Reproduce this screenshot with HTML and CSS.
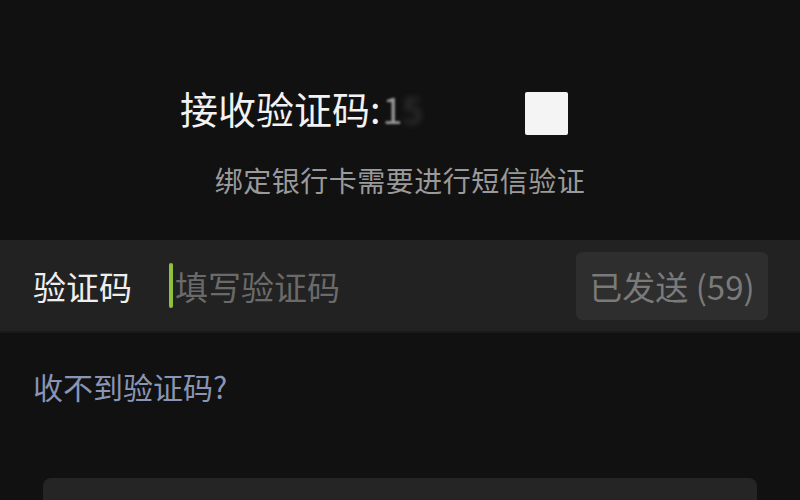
FILE: index.html
```html
<!DOCTYPE html>
<html lang="zh">
<head>
<meta charset="utf-8">
<link rel="stylesheet" href="styles.css">
</head>
<body>
<div class="page">
  <div class="title-row">
    <span class="title">接收验证码:</span><span class="digit">1</span><span class="blurred">5&nbsp;&nbsp;&nbsp;&nbsp;</span>
    <span class="square"></span>
  </div>
  <div class="subtitle">绑定银行卡需要进行短信验证</div>
  <div class="input-row">
    <span class="label">验证码</span>
    <span class="caret"></span>
    <span class="placeholder">填写验证码</span>
    <span class="send-btn">已发送 (59)</span>
  </div>
  <div class="link">收不到验证码?</div>
  <div class="bottom-btn"></div>
</div>
</body>
</html>
```
FILE: styles.css
```css
html, body {
  margin: 0;
  padding: 0;
  background: #111111;
  width: 800px;
  height: 500px;
  overflow: hidden;
}
.page {
  font-family: "Noto Sans CJK SC", "Noto Sans", sans-serif;
  display: flex;
  flex-direction: column;
}
.title-row {
  display: flex;
  align-items: center;
  padding-left: 180px;
  margin-top: 86px;
  height: 44px;
}
.title {
  font-size: 38px;
  line-height: 44px;
  color: #f2f2f2;
}
.digit {
  font-size: 36px;
  line-height: 44px;
  color: #9a9a9a;
  filter: blur(1.2px);
  margin-left: 2px;
}
.blurred {
  font-size: 36px;
  line-height: 44px;
  color: #3a3a3a;
  filter: blur(3px);
  width: 122px;
}
.square {
  width: 43px;
  height: 43px;
  background: #f4f4f4;
  border-radius: 2px;
  margin-top: 10px;
}
.subtitle {
  margin-top: 32px;
  text-align: center;
  font-size: 28px;
  line-height: 36px;
  color: #9a9a9a;
  letter-spacing: 0.5px;
}
.input-row {
  margin-top: 42px;
  height: 93px;
  background: #222222;
  display: flex;
  align-items: center;
  padding: 0 32px 0 33px;
  border-bottom: 2px solid #1a1a1a;
  box-sizing: border-box;
}
.label {
  font-size: 33px;
  color: #eeeeee;
  width: 136px;
}
.caret {
  width: 4px;
  height: 45px;
  background: #8fc23c;
  border-radius: 2px;
  margin-right: 2px;
}
.placeholder {
  font-size: 33px;
  color: #6a6a6a;
  flex: 1;
}
.send-btn {
  width: 192px;
  height: 68px;
  background: #2e2e2e;
  border-radius: 6px;
  display: flex;
  align-items: center;
  justify-content: center;
  font-size: 33px;
  color: #7a7a7a;
}
.link {
  margin-top: 33px;
  padding-left: 33px;
  font-size: 30px;
  line-height: 40px;
  color: #8a95b5;
}
.bottom-btn {
  margin: 72px 43px 0 43px;
  height: 22px;
  background: #252525;
  border-radius: 8px 8px 0 0;
}
```
